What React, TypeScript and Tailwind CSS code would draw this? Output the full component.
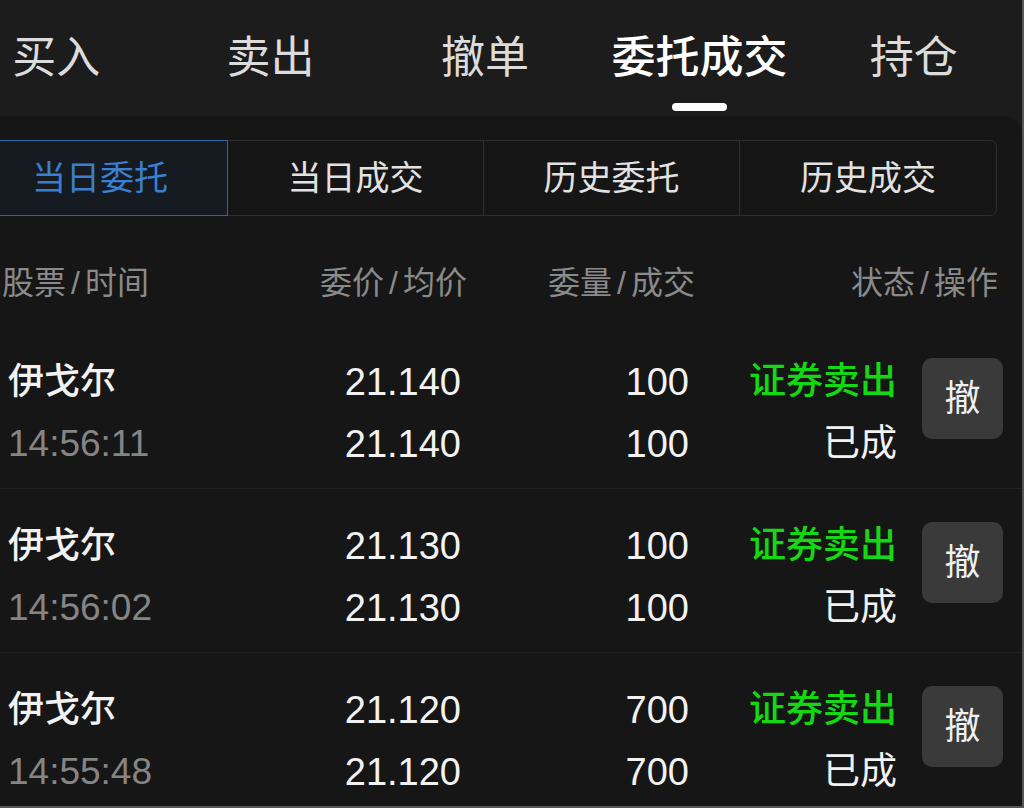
import React from "react";

const FONT = "font-['Liberation_Sans','Noto_Sans_CJK_SC',sans-serif]";

const tabs = ["买入", "卖出", "撤单", "委托成交", "持仓"];
const segs = ["当日委托", "当日成交", "历史委托", "历史成交"];

const rows = [
  { name: "伊戈尔", time: "14:56:11", price: "21.140", avg: "21.140", qty: "100", deal: "100" },
  { name: "伊戈尔", time: "14:56:02", price: "21.130", avg: "21.130", qty: "100", deal: "100" },
  { name: "伊戈尔", time: "14:55:48", price: "21.120", avg: "21.120", qty: "700", deal: "700" },
];

function Head({ a, b }: { a: string; b: string }) {
  return (
    <>
      {a}
      <span className="mx-[5px]">/</span>
      {b}
    </>
  );
}

export default function App() {
  return (
    <div
      className={`w-[1024px] h-[808px] overflow-hidden bg-[#1c1c1c] border-r-2 border-b-2 border-[#575757] flex flex-col ${FONT}`}
    >
      {/* top tabs */}
      <div className="h-[116px] shrink-0 overflow-hidden">
        <div className="grid grid-cols-5 w-[1072px] -ml-[51px]">
          {tabs.map((t, i) => {
            const active = i === 3;
            return (
              <div key={t} className="flex flex-col items-center pt-[34px]">
                <span
                  className={`text-[44px] leading-[48px] ${
                    active ? "text-white font-medium" : "text-[#dcdcdc]"
                  }`}
                >
                  {t}
                </span>
                {active && <div className="mt-[21px] h-[8px] w-[55px] rounded-full bg-white" />}
              </div>
            );
          })}
        </div>
      </div>

      {/* content panel */}
      <div className="flex-1 bg-[#161616] rounded-tr-[18px] pt-[24px] overflow-hidden">
        {/* segmented */}
        <div className="flex -ml-[28px] w-[1025px] h-[76px] border border-[#2f2f2f] rounded-[7px]">
          {segs.map((s, i) => {
            const active = i === 0;
            return (
              <div
                key={s}
                className={`w-[256px] flex items-center justify-center text-[34px] ${
                  active
                    ? "-my-px -ml-px border border-[#2d67a6] bg-[#151b21] text-[#3b7fd0]"
                    : i < 3
                    ? "border-r border-[#2f2f2f] text-[#e2e2e2]"
                    : "text-[#e2e2e2]"
                }`}
              >
                {s}
              </div>
            );
          })}
        </div>

        {/* header */}
        <div className="flex pt-[48px] pb-[23px] text-[32px] leading-[38px] text-[#8a8a8a]">
          <div className="w-[317px] pl-[2px]">
            <Head a="股票" b="时间" />
          </div>
          <div className="w-[150px] text-right">
            <Head a="委价" b="均价" />
          </div>
          <div className="w-[228px] text-right">
            <Head a="委量" b="成交" />
          </div>
          <div className="w-[303px] text-right">
            <Head a="状态" b="操作" />
          </div>
        </div>

        {/* rows */}
        {rows.map((r, idx) => (
          <div key={idx} className="flex h-[164px] border-b border-[#222222] pt-[26px]">
            <div className="w-[300px] pl-[8px] flex flex-col">
              <span className="text-[36px] leading-[62px] text-[#f2f2f2] font-medium">{r.name}</span>
              <span className="text-[37px] leading-[62px] text-[#858585]">{r.time}</span>
            </div>
            <div className="w-[161px] flex flex-col items-end text-[38px] leading-[62px] text-[#f2f2f2] font-medium">
              <span>{r.price}</span>
              <span>{r.avg}</span>
            </div>
            <div className="w-[228px] flex flex-col items-end text-[38px] leading-[62px] text-[#f2f2f2] font-medium">
              <span>{r.qty}</span>
              <span>{r.deal}</span>
            </div>
            <div className="w-[208px] flex flex-col items-end text-[37px] leading-[62px]">
              <span className="text-[#14d814] font-medium">证券卖出</span>
              <span className="text-[#f2f2f2]">已成</span>
            </div>
            <div className="ml-[25px] mt-[7px] w-[81px] h-[81px] rounded-[10px] bg-[#3a3a3a] flex items-center justify-center text-[36px] text-[#f0f0f0]">
              撤
            </div>
          </div>
        ))}
      </div>
    </div>
  );
}
